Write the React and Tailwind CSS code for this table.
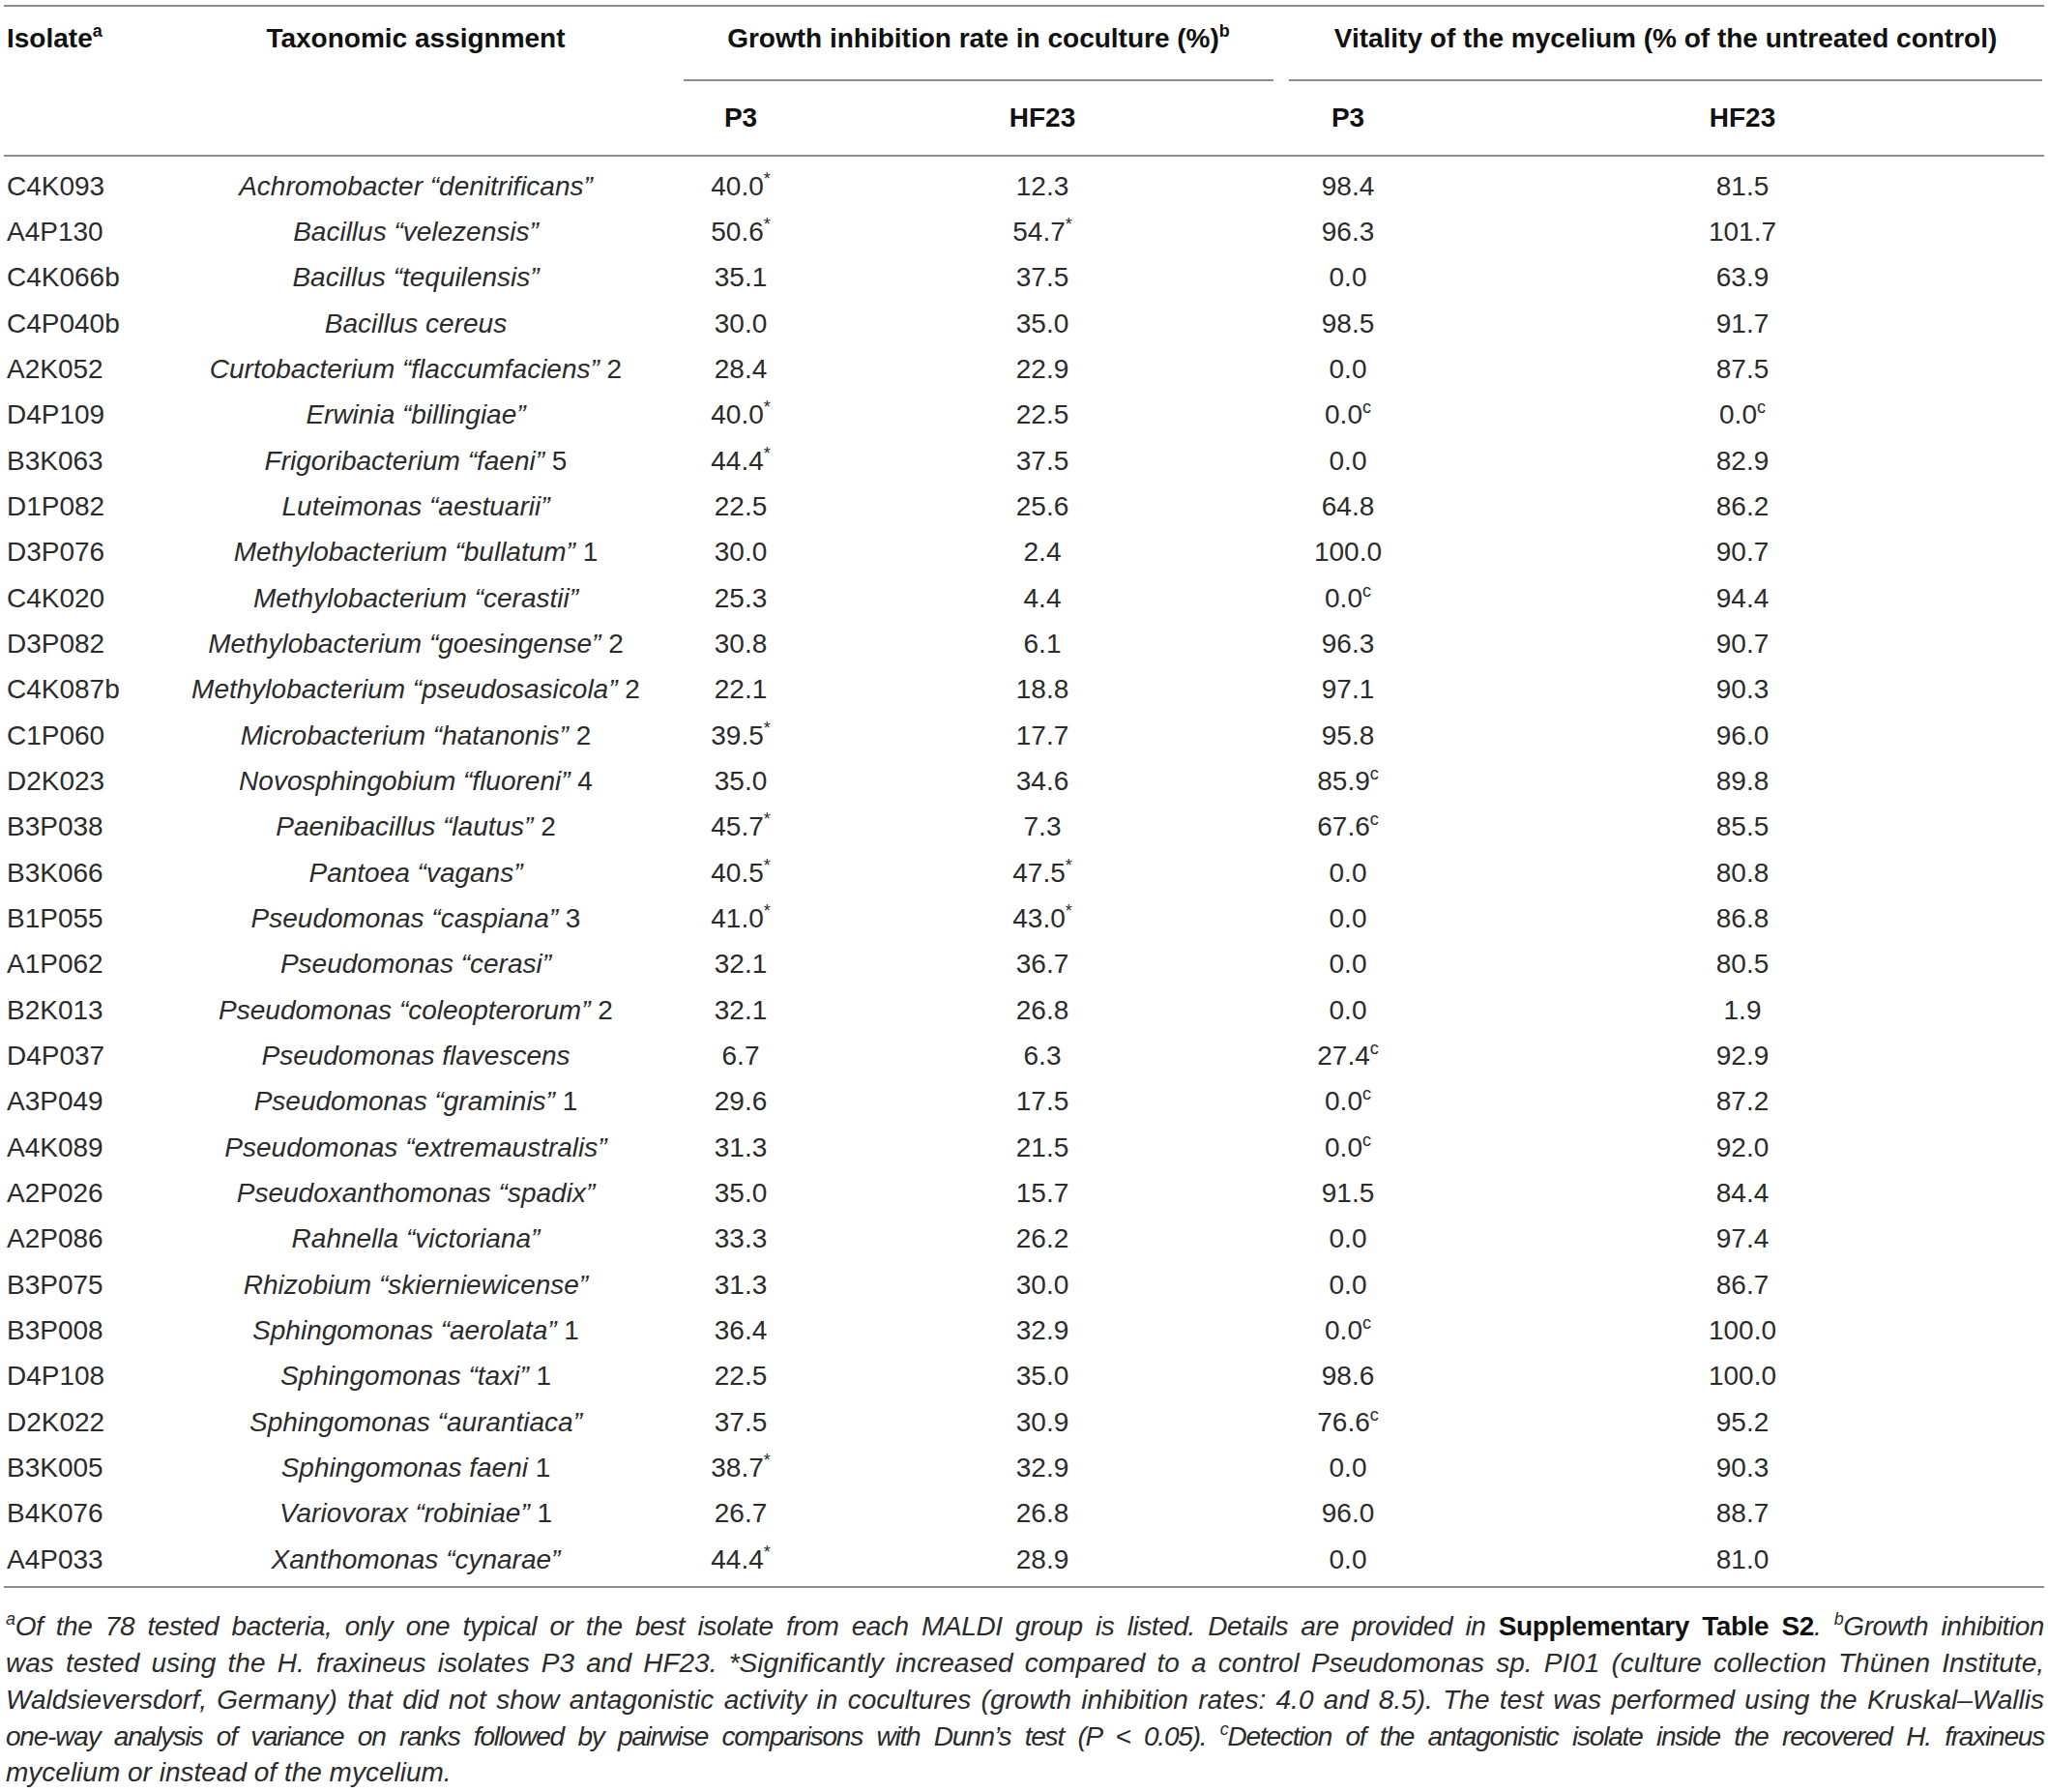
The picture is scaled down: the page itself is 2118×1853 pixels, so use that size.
import React from "react";

const rows = [
  ["C4K093", ["Achromobacter “denitrificans”", ""], ["40.0", "*"], ["12.3", ""], ["98.4", ""], ["81.5", ""]],
  ["A4P130", ["Bacillus “velezensis”", ""], ["50.6", "*"], ["54.7", "*"], ["96.3", ""], ["101.7", ""]],
  ["C4K066b", ["Bacillus “tequilensis”", ""], ["35.1", ""], ["37.5", ""], ["0.0", ""], ["63.9", ""]],
  ["C4P040b", ["Bacillus cereus", ""], ["30.0", ""], ["35.0", ""], ["98.5", ""], ["91.7", ""]],
  ["A2K052", ["Curtobacterium “flaccumfaciens”", " 2"], ["28.4", ""], ["22.9", ""], ["0.0", ""], ["87.5", ""]],
  ["D4P109", ["Erwinia “billingiae”", ""], ["40.0", "*"], ["22.5", ""], ["0.0", "c"], ["0.0", "c"]],
  ["B3K063", ["Frigoribacterium “faeni”", " 5"], ["44.4", "*"], ["37.5", ""], ["0.0", ""], ["82.9", ""]],
  ["D1P082", ["Luteimonas “aestuarii”", ""], ["22.5", ""], ["25.6", ""], ["64.8", ""], ["86.2", ""]],
  ["D3P076", ["Methylobacterium “bullatum”", " 1"], ["30.0", ""], ["2.4", ""], ["100.0", ""], ["90.7", ""]],
  ["C4K020", ["Methylobacterium “cerastii”", ""], ["25.3", ""], ["4.4", ""], ["0.0", "c"], ["94.4", ""]],
  ["D3P082", ["Methylobacterium “goesingense”", " 2"], ["30.8", ""], ["6.1", ""], ["96.3", ""], ["90.7", ""]],
  ["C4K087b", ["Methylobacterium “pseudosasicola”", " 2"], ["22.1", ""], ["18.8", ""], ["97.1", ""], ["90.3", ""]],
  ["C1P060", ["Microbacterium “hatanonis”", " 2"], ["39.5", "*"], ["17.7", ""], ["95.8", ""], ["96.0", ""]],
  ["D2K023", ["Novosphingobium “fluoreni”", " 4"], ["35.0", ""], ["34.6", ""], ["85.9", "c"], ["89.8", ""]],
  ["B3P038", ["Paenibacillus “lautus”", " 2"], ["45.7", "*"], ["7.3", ""], ["67.6", "c"], ["85.5", ""]],
  ["B3K066", ["Pantoea “vagans”", ""], ["40.5", "*"], ["47.5", "*"], ["0.0", ""], ["80.8", ""]],
  ["B1P055", ["Pseudomonas “caspiana”", " 3"], ["41.0", "*"], ["43.0", "*"], ["0.0", ""], ["86.8", ""]],
  ["A1P062", ["Pseudomonas “cerasi”", ""], ["32.1", ""], ["36.7", ""], ["0.0", ""], ["80.5", ""]],
  ["B2K013", ["Pseudomonas “coleopterorum”", " 2"], ["32.1", ""], ["26.8", ""], ["0.0", ""], ["1.9", ""]],
  ["D4P037", ["Pseudomonas flavescens", ""], ["6.7", ""], ["6.3", ""], ["27.4", "c"], ["92.9", ""]],
  ["A3P049", ["Pseudomonas “graminis”", " 1"], ["29.6", ""], ["17.5", ""], ["0.0", "c"], ["87.2", ""]],
  ["A4K089", ["Pseudomonas “extremaustralis”", ""], ["31.3", ""], ["21.5", ""], ["0.0", "c"], ["92.0", ""]],
  ["A2P026", ["Pseudoxanthomonas “spadix”", ""], ["35.0", ""], ["15.7", ""], ["91.5", ""], ["84.4", ""]],
  ["A2P086", ["Rahnella “victoriana”", ""], ["33.3", ""], ["26.2", ""], ["0.0", ""], ["97.4", ""]],
  ["B3P075", ["Rhizobium “skierniewicense”", ""], ["31.3", ""], ["30.0", ""], ["0.0", ""], ["86.7", ""]],
  ["B3P008", ["Sphingomonas “aerolata”", " 1"], ["36.4", ""], ["32.9", ""], ["0.0", "c"], ["100.0", ""]],
  ["D4P108", ["Sphingomonas “taxi”", " 1"], ["22.5", ""], ["35.0", ""], ["98.6", ""], ["100.0", ""]],
  ["D2K022", ["Sphingomonas “aurantiaca”", ""], ["37.5", ""], ["30.9", ""], ["76.6", "c"], ["95.2", ""]],
  ["B3K005", ["Sphingomonas faeni", " 1"], ["38.7", "*"], ["32.9", ""], ["0.0", ""], ["90.3", ""]],
  ["B4K076", ["Variovorax “robiniae”", " 1"], ["26.7", ""], ["26.8", ""], ["96.0", ""], ["88.7", ""]],
  ["A4P033", ["Xanthomonas “cynarae”", ""], ["44.4", "*"], ["28.9", ""], ["0.0", ""], ["81.0", ""]],
];

const Sup = ({ children }) => (
  <sup className="text-[18px] relative top-[-11px] align-baseline">{children}</sup>
);

function Value({ v, className }) {
  return (
    <div className={"text-center whitespace-nowrap " + (className || "")}>
      {v[0]}
      {v[1] && <Sup>{v[1]}</Sup>}
    </div>
  );
}

function Rule({ className }) {
  return <div className={"h-[2px] bg-[#8d8d8d] " + (className || "")} />;
}

export default function App() {
  return (
    <div
      className="w-[2118px] bg-white px-[4px] pt-[5px] text-[28px] text-[#2b2b2b]"
      style={{ fontFamily: '"Liberation Sans", Arial, sans-serif' }}
    >
      <Rule />

      {/* header */}
      <div className="grid grid-cols-[176px_500px_172px_478px_128px_656px] font-bold text-[#111] leading-[36px]">
        <div className="pl-[3px] pt-[15px]">
          Isolate<Sup>a</Sup>
        </div>
        <div className="text-center pt-[15px]">Taxonomic assignment</div>
        <div className="col-span-2 ml-[27px] mr-[13px] flex flex-col h-[77px]">
          <div className="text-center pt-[15px]">
            Growth inhibition rate in coculture (%)<Sup>b</Sup>
          </div>
          <Rule className="mt-auto" />
        </div>
        <div className="col-span-2 ml-[3px] mr-[2px] flex flex-col h-[77px]">
          <div className="text-center pt-[15px]">
            Vitality of the mycelium (% of the untreated control)
          </div>
          <Rule className="mt-auto" />
        </div>

        <div className="h-[76px]" />
        <div />
        <div className="text-center pt-[20px]">P3</div>
        <div className="text-center pt-[20px] pr-[26px]">HF23</div>
        <div className="text-center pt-[20px]">P3</div>
        <div className="text-center pt-[20px] pl-[32px]">HF23</div>
      </div>
      <Rule />

      {/* body */}
      <div className="pt-[7px] pb-[4px]">
        {rows.map((r) => (
          <div
            key={r[0]}
            className="grid grid-cols-[176px_500px_172px_478px_128px_656px] h-[47.33px] items-center"
          >
            <div className="pl-[3px] whitespace-nowrap">{r[0]}</div>
            <div className="text-center whitespace-nowrap">
              <span className="italic">{r[1][0]}</span>
              {r[1][1]}
            </div>
            <Value v={r[2]} />
            <Value v={r[3]} className="pr-[26px]" />
            <Value v={r[4]} />
            <Value v={r[5]} className="pl-[32px]" />
          </div>
        ))}
      </div>
      <Rule />

      {/* footnote */}
      <div className="mt-[21px] italic leading-[37.8px] pl-[2px]">
        <div className="text-justify [text-align-last:justify] whitespace-nowrap tracking-[-0.4px]">
          <Sup>a</Sup>Of the 78 tested bacteria, only one typical or the best isolate from each MALDI group is listed. Details are provided in{" "}
          <b className="not-italic font-bold text-[#111]">Supplementary Table S2</b>. <Sup>b</Sup>Growth inhibition
        </div>
        <div className="text-justify [text-align-last:justify] whitespace-nowrap">
          was tested using the H. fraxineus isolates P3 and HF23. *Significantly increased compared to a control Pseudomonas sp. PI01 (culture collection Thünen Institute,
        </div>
        <div className="text-justify [text-align-last:justify] whitespace-nowrap">
          Waldsieversdorf, Germany) that did not show antagonistic activity in cocultures (growth inhibition rates: 4.0 and 8.5). The test was performed using the Kruskal–Wallis
        </div>
        <div className="text-justify [text-align-last:justify] whitespace-nowrap tracking-[-1.2px]">
          one-way analysis of variance on ranks followed by pairwise comparisons with Dunn’s test (P &lt; 0.05). <Sup>c</Sup>Detection of the antagonistic isolate inside the recovered H. fraxineus
        </div>
        <div>mycelium or instead of the mycelium.</div>
      </div>
    </div>
  );
}
